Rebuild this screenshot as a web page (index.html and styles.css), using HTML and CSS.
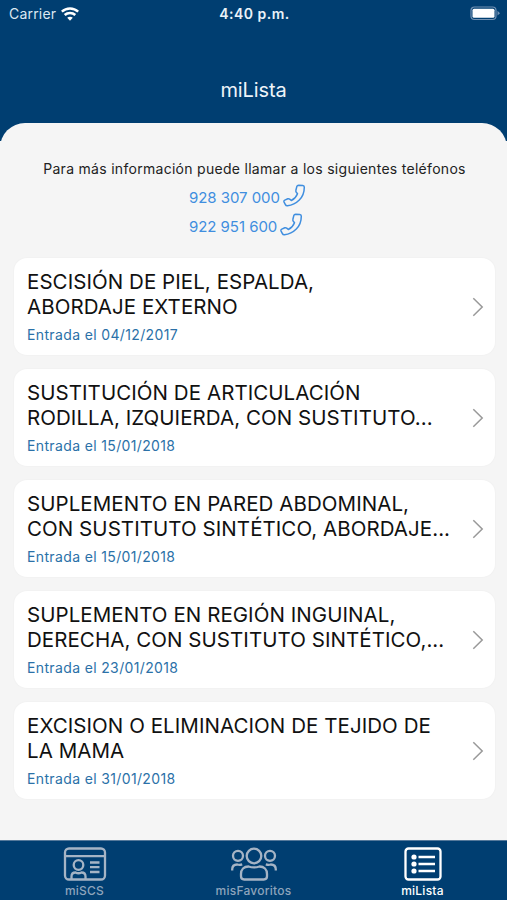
FILE: index.html
```html
<!DOCTYPE html>
<html lang="es">
<head>
    <meta charset="UTF-8">
    <meta name="viewport" content="width=device-width, initial-scale=1.0">
    <title>miLista</title>
    <link rel="stylesheet" href="styles.css">
</head>
<body>
    <!-- Header -->
    <header class="header">
        <div class="status-bar">
            <div class="carrier">
                <span>Carrier</span>
                <svg width="18" height="14" viewBox="0 0 18 14" fill="none" stroke="#fff" stroke-width="2.5">
                    <path d="M.8 4.600C5.400.300 12.600.300 17.200 4.600"/>
                    <path d="M3.700 8c2.900-2.800 7.700-2.800 10.600 0"/>
                    <path d="M6.200 10.800C7.800 9.300 10.200 9.300 11.800 10.800L9 13.700Z" fill="#fff" stroke="none"/>
                </svg>
            </div>
            <div class="clock">4:40 p.m.</div>
            <div class="battery">
                <svg width="31" height="15" viewBox="0 0 31 15">
                    <rect x="2" y="1" width="25" height="12.500" rx="3.500" fill="none" stroke="#7292b4" stroke-width="1.200"/>
                    <rect x="3.500" y="2.800" width="22" height="9" rx="1.500" fill="#fff"/>
                    <path d="M28.500 4.800 31 7.200 28.500 9.600Z" fill="#7292b4"/>
                </svg>
            </div>
        </div>
        <h1>miLista</h1>
    </header>

    <!-- Waiting list -->
    <main class="panel">
        <p class="info">Para más información puede llamar a los siguientes teléfonos</p>
        <div class="phones">
            <a class="phone" href="tel:928307000">
                <span>928 307 000</span>
                <svg width="23" height="23" viewBox="0 0 23 23"><use href="#phone"/></svg>
            </a>
            <a class="phone" href="tel:922951600">
                <span>922 951 600</span>
                <svg width="23" height="23" viewBox="0 0 23 23"><use href="#phone"/></svg>
            </a>
        </div>

        <div class="list">
            <div class="card">
                <div class="card-text">
                    <h2><span>ESCISIÓN DE PIEL, ESPALDA,</span><br><span>ABORDAJE EXTERNO</span></h2>
                    <p>Entrada el 04/12/2017</p>
                </div>
                <svg class="arrow" width="12" height="20" viewBox="0 0 12 20"><path d="M1.300 1.200 10.200 10 1.300 18.800"/></svg>
            </div>
            <div class="card">
                <div class="card-text">
                    <h2><span>SUSTITUCIÓN DE ARTICULACIÓN</span><br><span>RODILLA, IZQUIERDA, CON SUSTITUTO...</span></h2>
                    <p>Entrada el 15/01/2018</p>
                </div>
                <svg class="arrow" width="12" height="20" viewBox="0 0 12 20"><path d="M1.300 1.200 10.200 10 1.300 18.800"/></svg>
            </div>
            <div class="card">
                <div class="card-text">
                    <h2><span>SUPLEMENTO EN PARED ABDOMINAL,</span><br><span>CON SUSTITUTO SINTÉTICO, ABORDAJE...</span></h2>
                    <p>Entrada el 15/01/2018</p>
                </div>
                <svg class="arrow" width="12" height="20" viewBox="0 0 12 20"><path d="M1.300 1.200 10.200 10 1.300 18.800"/></svg>
            </div>
            <div class="card">
                <div class="card-text">
                    <h2><span>SUPLEMENTO EN REGIÓN INGUINAL,</span><br><span>DERECHA, CON SUSTITUTO SINTÉTICO,...</span></h2>
                    <p>Entrada el 23/01/2018</p>
                </div>
                <svg class="arrow" width="12" height="20" viewBox="0 0 12 20"><path d="M1.300 1.200 10.200 10 1.300 18.800"/></svg>
            </div>
            <div class="card">
                <div class="card-text">
                    <h2><span>EXCISION O ELIMINACION DE TEJIDO DE</span><br><span>LA MAMA</span></h2>
                    <p>Entrada el 31/01/2018</p>
                </div>
                <svg class="arrow" width="12" height="20" viewBox="0 0 12 20"><path d="M1.300 1.200 10.200 10 1.300 18.800"/></svg>
            </div>
        </div>
    </main>

    <!-- Tabs -->
    <nav class="tabs">
        <a class="tab" href="#">
            <svg width="46" height="34" viewBox="0 0 46 34">
                <rect x="3" y="1.500" width="40" height="31" rx="4"/>
                <path d="M3 9.200h40M28 15.500h9.500M28 20.200h9.500M28 25h9.500"/>
                <circle cx="16.500" cy="18" r="4.800"/>
                <path d="M9.500 32v-2.500c0-2.500 1.500-4 4-4 2 1 4 1 6 0 2.500 0 4 1.500 4 4V32"/>
            </svg>
            <span>miSCS</span>
        </a>
        <a class="tab" href="#">
            <svg width="46" height="34" viewBox="0 0 46 34">
                <circle cx="23" cy="9" r="7.300"/>
                <circle cx="7" cy="8.800" r="5"/>
                <circle cx="39" cy="8.800" r="5"/>
                <path d="M17.500 19.500c3.700 1.300 7.300 1.300 11 0 4.500 0 7.500 3 7.500 7.500v2.300c0 2-1.200 3.200-3.200 3.200H13.200c-2 0-3.200-1.200-3.200-3.200V27c0-4.500 3-7.500 7.500-7.500Z"/>
                <path d="M1.200 23.500v-1c0-3 2-5 5-5 1.700.5 3.300.4 5-.2M44.800 23.500v-1c0-3-2-5-5-5-1.700.5-3.300.4-5-.2"/>
            </svg>
            <span>misFavoritos</span>
        </a>
        <a class="tab active" href="#">
            <svg width="46" height="34" viewBox="0 0 46 34">
                <rect x="5.500" y="1.500" width="35" height="31" rx="3"/>
                <path d="M18.500 10H35M18.500 17H35M18.500 24H35"/>
                <g class="dots"><circle cx="14" cy="10" r="2.600"/><circle cx="14" cy="17" r="2.600"/><circle cx="14" cy="24" r="2.600"/></g>
            </svg>
            <span>miLista</span>
        </a>
    </nav>

    <svg class="symbols" width="0" height="0">
        <symbol id="phone" viewBox="0 0 23 23">
            <path d="M15.600 1.300 19.800 1.500C20.800 1.600 21.300 2.200 21.300 3.200 21.300 8.300 19.600 12.700 16.300 16 13.300 19 9.200 21.200 4.500 21.700 3.500 21.800 2.800 21.500 2.400 20.600L1.100 18.100C.7 17.200 1 16.500 1.800 16.100L4.800 14.800C5.500 14.500 6.100 14.700 6.700 15.200L8.300 16.500C11.400 15 13.400 12.600 14.500 9.700L13.300 8.200C12.800 7.500 12.700 6.900 12.900 6.200L13.800 2.600C14.100 1.700 14.600 1.300 15.600 1.300Z"/>
        </symbol>
    </svg>
</body>
</html>
```
FILE: styles.css
```css
* {
    margin: 0;
    padding: 0;
    box-sizing: border-box;
}

body {
    font-family: Inter, "Liberation Sans", sans-serif;
    background: #f5f5f5;
    height: 100vh;
    display: flex;
    flex-direction: column;
    overflow: hidden;
}

a {
    text-decoration: none;
}

svg {
    flex: none;
}

.header {
    height: 141px;
    background: #003e71;
    color: #fff;
    flex: none;
}

.status-bar {
    display: grid;
    grid-template-columns: 1fr auto 1fr;
    align-items: center;
    height: 27px;
    padding: 0 7px 0 9px;
}

.carrier {
    display: flex;
    align-items: center;
    gap: 5px;
    font-size: 14px;
    letter-spacing: 0.2px;
    color: #dce8f2;
}

.clock {
    font-size: 14px;
    font-weight: 600;
    letter-spacing: 0.5px;
    color: #eaf2f8;
}

.battery {
    display: flex;
    justify-content: flex-end;
}

h1 {
    margin-top: 50px;
    text-align: center;
    font-size: 20px;
    line-height: 26px;
    font-weight: 400;
    letter-spacing: -0.1px;
    color: #eef4f9;
}

.panel {
    flex: 1;
    margin-top: -18px;
    padding: 36px 12px 0 14px;
    background: #f5f5f5;
    border-radius: 25px 25px 0 0;
}

.info {
    text-align: center;
    font-size: 14px;
    line-height: 20px;
    letter-spacing: 0.29px;
    color: #222;
}

.phones {
    display: flex;
    flex-direction: column;
    align-items: flex-start;
    padding: 4px 0 0 175px;
}

.phone {
    display: flex;
    align-items: center;
    gap: 3px;
    height: 29px;
    font-size: 15px;
    letter-spacing: -0.05px;
    color: #3f8edf;
}

.phone svg {
    margin-top: -5px;
    fill: none;
    stroke: #3f8edf;
    stroke-width: 1.5;
    stroke-linejoin: round;
}

.list {
    display: flex;
    flex-direction: column;
    gap: 14px;
    margin-top: 17px;
}

.card {
    display: flex;
    align-items: center;
    justify-content: space-between;
    height: 97px;
    padding: 0 11px 0 13px;
    background: #fff;
    border-radius: 13px;
    box-shadow: 0 0 2px rgba(0, 0, 0, 0.05);
}

.card-text {
    white-space: nowrap;
}

.card h2 {
    font-size: 20.5px;
    line-height: 24.5px;
    font-weight: 400;
    letter-spacing: 0.06px;
    color: #111;
}

.card p {
    margin-top: 7px;
    font-size: 14px;
    line-height: 17px;
    letter-spacing: 0.36px;
    color: #2b71a8;
}

.arrow {
    fill: none;
    stroke: #999;
    stroke-width: 1.5;
}

.tabs {
    display: grid;
    grid-template-columns: repeat(3, 1fr);
    flex: none;
    height: 60px;
    background: #003e71;
    border-top: 1px solid #55799b;
}

.tab {
    display: flex;
    flex-direction: column;
    align-items: center;
    padding-top: 6px;
    font-size: 12px;
    line-height: 16px;
    font-weight: 500;
    letter-spacing: 0.25px;
    color: #8da4bc;
}

.tab svg {
    fill: none;
    stroke: #a5b4c5;
    stroke-width: 2.3;
    margin-bottom: 2px;
}

.tab.active {
    color: #fff;
}

.tab.active svg {
    stroke: #fff;
}

.tab .dots {
    fill: #fff;
    stroke: none;
}

.symbols {
    position: absolute;
}
```
